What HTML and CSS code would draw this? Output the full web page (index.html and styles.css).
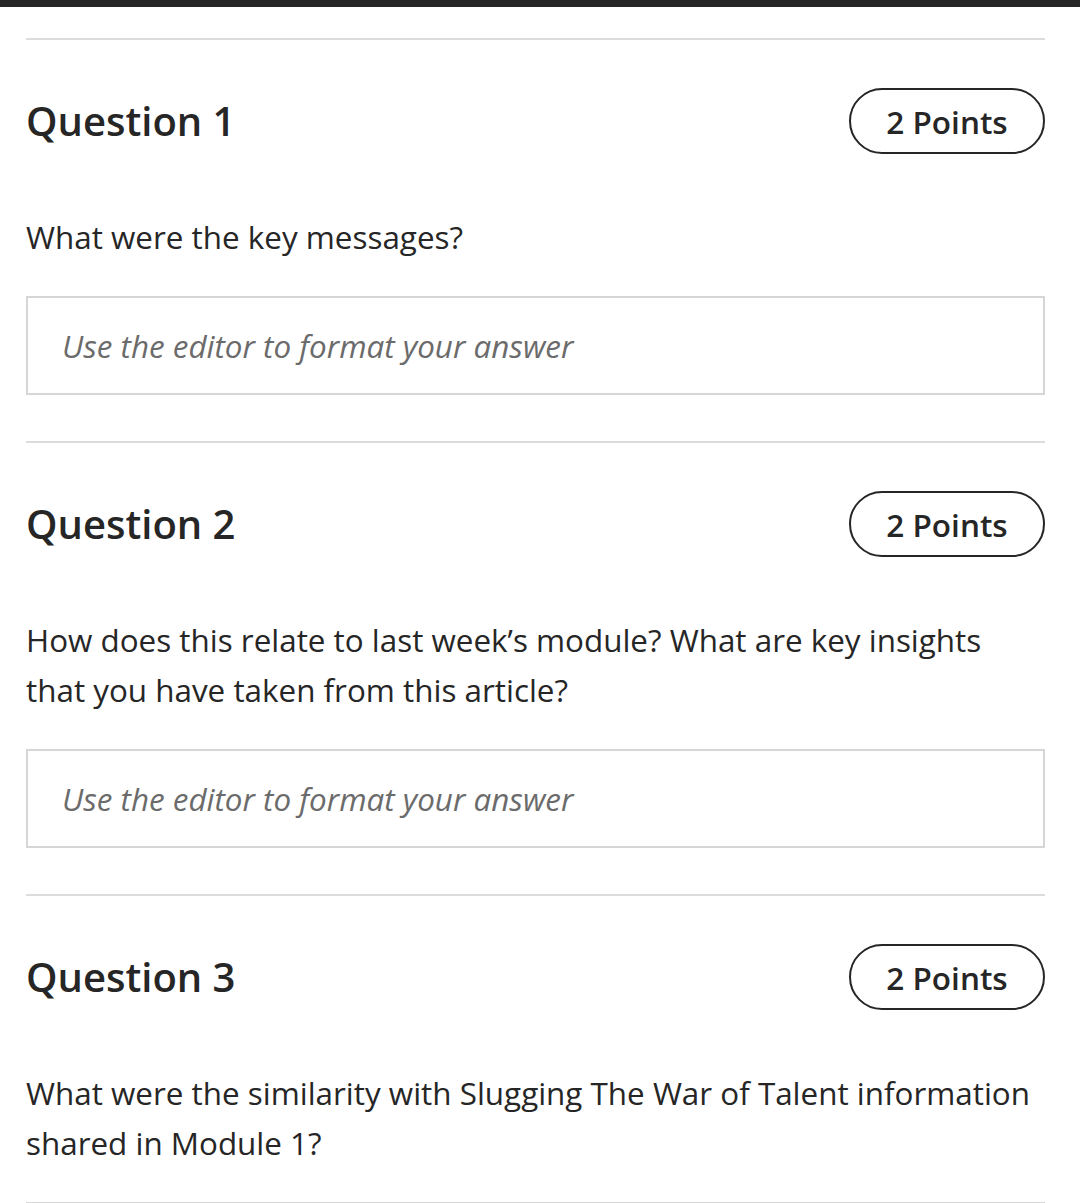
FILE: index.html
```html
<!DOCTYPE html>
<html lang="en">
<head>
<meta charset="utf-8">
<title>Questions</title>
<link rel="stylesheet" href="styles.css">
</head>
<body>
<div class="topbar"></div>
<main class="page">
  <section class="question">
    <div class="q-head">
      <h2 class="q-title">Question 1</h2>
      <span class="pill">2 Points</span>
    </div>
    <p class="q-text">What were the key messages?</p>
    <div class="editor"><span class="placeholder">Use the editor to format your answer</span></div>
  </section>
  <section class="question">
    <div class="q-head">
      <h2 class="q-title">Question 2</h2>
      <span class="pill">2 Points</span>
    </div>
    <p class="q-text">How does this relate to last week’s module? What are key insights that you have taken from this article?</p>
    <div class="editor"><span class="placeholder">Use the editor to format your answer</span></div>
  </section>
  <section class="question">
    <div class="q-head">
      <h2 class="q-title">Question 3</h2>
      <span class="pill">2 Points</span>
    </div>
    <p class="q-text">What were the similarity with Slugging The War of Talent information shared in Module 1?</p>
    <div class="editor"></div>
  </section>
</main>
</body>
</html>
```
FILE: styles.css
```css
html, body {
  margin: 0;
  padding: 0;
  background: #ffffff;
}
body {
  font-family: "Open Sans", "Noto Sans", sans-serif;
  color: #262626;
  overflow: hidden;
}
.topbar {
  height: 7px;
  background: #262626;
}
.page {
  padding: 31px 35px 0 26px;
}
.question {
  border-top: 2px solid #dcdcdc;
  padding-top: 48px;
  padding-bottom: 46px;
}
.q-head {
  display: flex;
  justify-content: space-between;
  align-items: center;
  height: 66px;
}
.q-title {
  margin: 0;
  font-size: 40px;
  font-weight: 600;
  line-height: 1;
}
.pill {
  box-sizing: border-box;
  height: 66px;
  width: 196px;
  border: 2px solid #262626;
  border-radius: 33px;
  display: flex;
  align-items: center;
  justify-content: center;
  font-size: 31.5px;
  font-weight: 600;
}
.q-text {
  margin: 58px 0 0;
  font-size: 31.4px;
  line-height: 50px;
  font-weight: 400;
}
.editor {
  box-sizing: border-box;
  margin-top: 34px;
  height: 99px;
  border: 2px solid #d6d6d6;
  padding-left: 34px;
  display: flex;
  align-items: center;
}
.placeholder {
  font-style: italic;
  font-size: 31.4px;
  color: #6b6b6b;
}
```
